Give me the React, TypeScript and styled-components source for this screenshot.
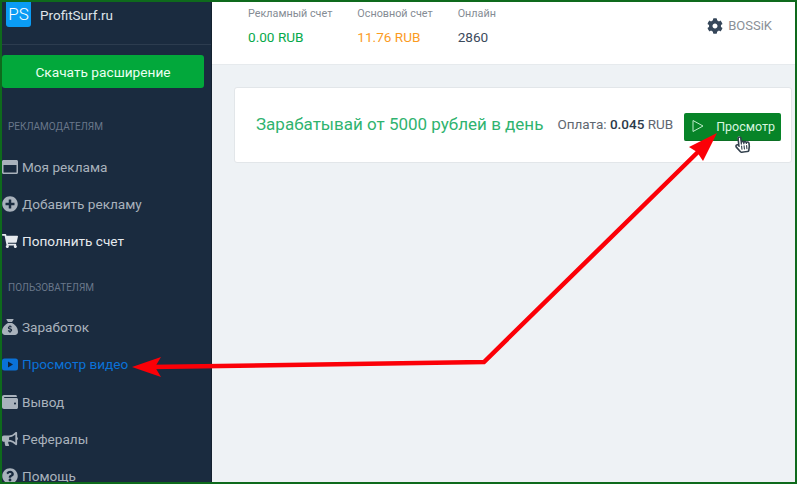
import styled, { createGlobalStyle } from "styled-components";
import {
  FaBullhorn,
  FaCog,
  FaHandPointer,
  FaPlusCircle,
  FaQuestionCircle,
  FaRegHandPointer,
  FaRegWindowMaximize,
  FaShoppingCart,
  FaWallet,
} from "react-icons/fa";
import { FaSackDollar } from "react-icons/fa6";
import type { ReactNode } from "react";

const GlobalStyle = createGlobalStyle`
  html, body {
    margin: 0;
    padding: 0;
    background: #fff;
  }
  * {
    box-sizing: border-box;
  }
`;

const Frame = styled.div`
  position: relative;
  width: 797px;
  height: 484px;
  border: 2px solid #0e6a1c;
  display: flex;
  overflow: hidden;
  font-family: Roboto, "Liberation Sans", sans-serif;
  background: #eef2f5;
`;

const Sidebar = styled.aside`
  width: 210px;
  flex: none;
  background: #1a2b3f;
  color: #b9c1ca;
  border-right: 1px solid #14212f;
`;

const Brand = styled.div`
  height: 43px;
  border-bottom: 1px solid #2c3c4f;
  display: flex;
  align-items: flex-start;
  gap: 9px;
  padding-left: 4px;
`;

const Logo = styled.div`
  width: 25px;
  height: 25px;
  background: #0a9cf5;
  border-radius: 0 0 3px 3px;
  color: #fff;
  font-size: 17px;
  font-weight: 300;
  line-height: 24px;
  text-align: center;
`;

const BrandName = styled.div`
  color: #dfe4e9;
  font-size: 13.5px;
  line-height: 26px;
`;

const DownloadButton = styled.button`
  display: block;
  width: 202px;
  height: 33px;
  margin: 10px 0 0;
  border: none;
  border-radius: 3px;
  background: #02a83b;
  color: #eafff0;
  font-family: inherit;
  font-size: 13.7px;
  padding: 0;
`;

const SectionLabel = styled.div<{ $top: number }>`
  margin: ${(p) => p.$top}px 0 0 6px;
  color: #69778a;
  font-size: 10px;
  line-height: 12px;
  height: 12px;
  text-transform: uppercase;
`;

const Menu = styled.nav<{ $top: number }>`
  display: flex;
  flex-direction: column;
  gap: 16.25px;
  margin-top: ${(p) => p.$top}px;
`;

const MenuItem = styled.a<{ $tone?: "active" | "bright" }>`
  display: flex;
  align-items: center;
  height: 21px;
  font-size: 13.6px;
  white-space: nowrap;
  color: ${(p) =>
    p.$tone === "active" ? "#0a72d8" : p.$tone === "bright" ? "#e6eaee" : "#a9b2bc"};
`;

const MenuIcon = styled.span`
  width: 20px;
  display: flex;
  align-items: center;
  flex: none;
  font-size: 16px;
  color: inherit;
`;

const Main = styled.main`
  flex: 1;
  min-width: 0;
`;

const Header = styled.header`
  height: 63px;
  background: #fff;
  border-bottom: 1px solid #e6eaed;
  display: flex;
  align-items: flex-start;
  padding: 5px 0 0 36px;
  gap: 25px;
`;

const Stat = styled.div`
  display: flex;
  flex-direction: column;
  gap: 8px;
`;

const StatLabel = styled.div`
  color: #858c94;
  font-size: 10.8px;
  line-height: 14px;
`;

const StatValue = styled.div<{ $color: string }>`
  color: ${(p) => p.$color};
  font-size: 13.6px;
  line-height: 17px;
`;

const User = styled.div`
  margin-left: auto;
  margin-right: 23px;
  margin-top: 10px;
  display: flex;
  align-items: center;
  gap: 5px;
  color: #8a9097;
  font-size: 13px;
  line-height: 18px;

  svg {
    color: #36475a;
    font-size: 16px;
  }
`;

const Content = styled.section`
  padding: 22px 3px 0 22px;
`;

const Card = styled.div`
  height: 76px;
  background: #fff;
  border: 1px solid #e2e6e9;
  border-radius: 3px;
  display: flex;
  align-items: center;
  padding: 0 0 0 21px;
`;

const Headline = styled.div`
  color: #2fb36f;
  font-size: 17px;
  white-space: nowrap;
  margin-top: -2px;
`;

const Pay = styled.div`
  margin: -2px 0 0 14px;
  color: #5f6770;
  font-size: 13.5px;
  white-space: nowrap;

  b {
    color: #2c3a4a;
    font-weight: 500;
  }
`;

const WatchButton = styled.button`
  margin: 3px 0 0 11px;
  width: 97px;
  height: 28px;
  border: none;
  border-bottom: 1px solid #0c6f24;
  border-radius: 2px;
  background: #078428;
  color: #d9f7e0;
  font-family: inherit;
  font-size: 12.5px;
  display: flex;
  align-items: center;
  padding: 0 0 0 7px;

  svg {
    flex: none;
    margin-right: 11px;
  }
`;

const Overlay = styled.svg`
  position: absolute;
  left: -2px;
  top: -2px;
  pointer-events: none;
`;

const Cursor = styled.span`
  position: absolute;
  left: 732px;
  top: 134px;
  width: 16px;
  height: 18px;
  font-size: 17px;
  line-height: 18px;
  transform: rotate(-6deg);

  svg {
    position: absolute;
    left: 0;
    top: 0;
  }
`;

type Item = {
  icon: ReactNode;
  text: string;
  tone?: "active" | "bright";
};

const VideoIcon = () => (
  <svg width="17" height="13" viewBox="0 0 17 13">
    <rect width="16" height="12" y="0.5" rx="2.5" fill="#0a72d8" />
    <path d="M6 3.5 L11 6.5 L6 9.5 Z" fill="#10233a" />
  </svg>
);

const adItems: Item[] = [
  { icon: <FaRegWindowMaximize />, text: "Моя реклама" },
  { icon: <FaPlusCircle />, text: "Добавить рекламу" },
  { icon: <FaShoppingCart />, text: "Пополнить счет", tone: "bright" },
];

const userItems: Item[] = [
  { icon: <FaSackDollar />, text: "Заработок" },
  { icon: <VideoIcon />, text: "Просмотр видео", tone: "active" },
  { icon: <FaWallet />, text: "Вывод" },
  { icon: <FaBullhorn />, text: "Рефералы" },
  { icon: <FaQuestionCircle />, text: "Помощь" },
];

const renderItems = (items: Item[]) =>
  items.map((item) => (
    <MenuItem key={item.text} $tone={item.tone}>
      <MenuIcon>{item.icon}</MenuIcon>
      <span>{item.text}</span>
    </MenuItem>
  ));

export default function App() {
  return (
    <>
      <GlobalStyle />
      <Frame>
        <Sidebar>
          <Brand>
            <Logo>PS</Logo>
            <BrandName>ProfitSurf.ru</BrandName>
          </Brand>
          <DownloadButton>Скачать расширение</DownloadButton>
          <SectionLabel $top={33}>Рекламодателям</SectionLabel>
          <Menu $top={23}>{renderItems(adItems)}</Menu>
          <SectionLabel $top={30}>Пользователям</SectionLabel>
          <Menu $top={23}>{renderItems(userItems)}</Menu>
        </Sidebar>
        <Main>
          <Header>
            <Stat>
              <StatLabel>Рекламный счет</StatLabel>
              <StatValue $color="#06a94a">0.00 RUB</StatValue>
            </Stat>
            <Stat>
              <StatLabel>Основной счет</StatLabel>
              <StatValue $color="#fb9b1f">11.76 RUB</StatValue>
            </Stat>
            <Stat>
              <StatLabel>Онлайн</StatLabel>
              <StatValue $color="#3c4a5c">2860</StatValue>
            </Stat>
            <User>
              <FaCog />
              BOSSiK
            </User>
          </Header>
          <Content>
            <Card>
              <Headline>Зарабатывай от 5000 рублей в день</Headline>
              <Pay>
                Оплата: <b>0.045</b> RUB
              </Pay>
              <WatchButton>
                <svg width="14" height="14" viewBox="0 0 14 14" fill="none" stroke="#bfeccb" strokeWidth="1">
                  <path d="M2 1.5 L12 7 L2 12.5 Z" />
                </svg>
                Просмотр
              </WatchButton>
            </Card>
          </Content>
        </Main>
        <Overlay width="797" height="484" viewBox="0 0 797 484">
          <path d="M150 367 L484 362 L700 150" fill="none" stroke="#fb0007" strokeWidth="4.5" strokeLinejoin="miter" />
          <path d="M132 367 L161 357 L155 367 L161 377 Z" fill="#fb0007" />
          <path d="M717 133 L689 147 L697 152 L703 161 Z" fill="#fb0007" />
        </Overlay>
        <Cursor>
          <FaHandPointer color="#fff" />
          <FaRegHandPointer color="#33404d" />
        </Cursor>
      </Frame>
    </>
  );
}
